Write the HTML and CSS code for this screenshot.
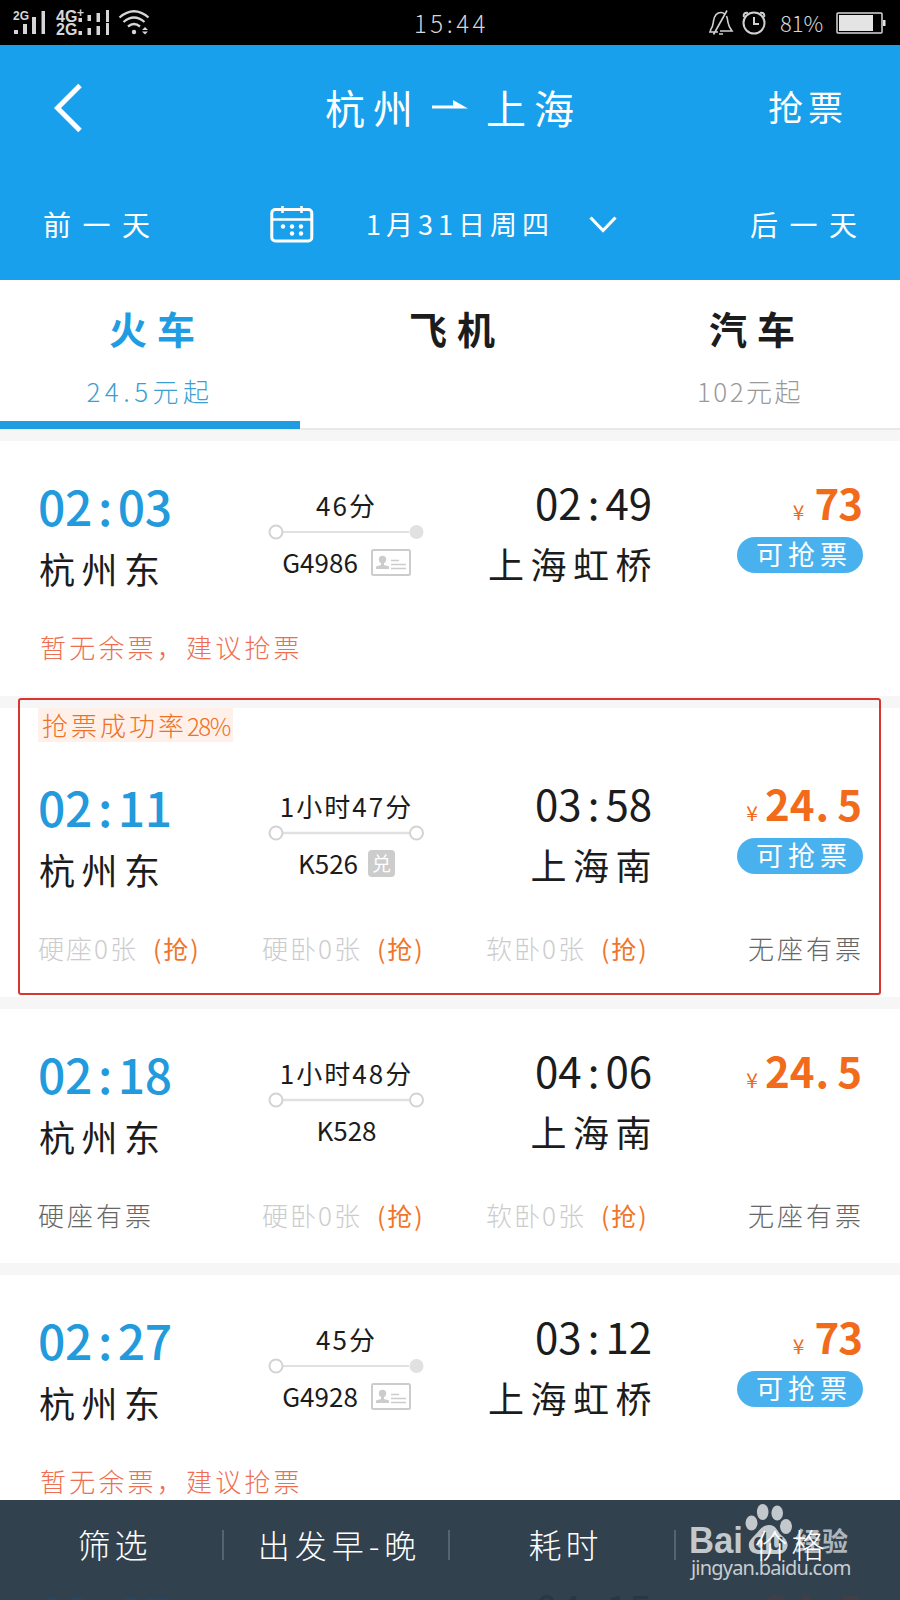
FILE: index.html
```html
<!DOCTYPE html>
<html lang="zh-CN">
<head>
<meta charset="utf-8">
<title>杭州 - 上海</title>
<link rel="stylesheet" href="styles.css">
</head>
<body>
<svg width="0" height="0" class="defs">
  <symbol id="idcard" viewBox="0 0 40 27"><rect x="1" y="1" width="38" height="25" rx="1.500" fill="#fff" stroke="#ccc" stroke-width="2"/><circle cx="11.500" cy="10.500" r="3.700" fill="#ccc"/><path d="M10 12h3v4l5 1.500V20H5v-2.500L10 16z" fill="#ccc"/><path d="M20 11.500h8M20 15.500h15M20 19.500h15" stroke="#ccc" stroke-width="1.600"/></symbol>
  <symbol id="route-open" viewBox="0 0 156 16"><path d="M15 8h126" stroke="#e1e1e1" stroke-width="2.500"/><circle cx="8" cy="8" r="6.500" fill="#fff" stroke="#d3d3d3" stroke-width="2"/><circle cx="148.500" cy="8" r="6.500" fill="#fff" stroke="#d3d3d3" stroke-width="2"/></symbol>
  <symbol id="route-end" viewBox="0 0 156 16"><path d="M15 8h126" stroke="#e1e1e1" stroke-width="2"/><circle cx="8" cy="8" r="6.500" fill="#fff" stroke="#d3d3d3" stroke-width="2"/><circle cx="148.500" cy="8" r="7" fill="#e1e1e1"/></symbol>
</svg>
<div class="screen">
  <div class="status">
    <svg class="signals" width="150" height="45" viewBox="0 0 150 45" fill="#d6d6d6">
      <text x="13" y="20" class="net-small">2G</text>
      <path d="M14 30h4v4h-4zM23 24h4v10h-4zM32 17h4v17h-4zM41.500 11h3.500v23h-3.500z"/>
      <text x="56" y="22" class="net">4G</text><text x="77" y="17" class="net-plus">+</text>
      <text x="56" y="35" class="net">2G</text>
      <path d="M78.500 18h3.500v4h-3.500zM87.500 15h3.500v6h-3.500zM96.500 13h3.500v9h-3.500zM106 10h3v12h-3zM78.500 31h3.500v4h-3.500zM87.500 28h3.500v7h-3.500zM96.500 26h3.500v9h-3.500zM106 23h3v12h-3z"/>
      <g fill="none" stroke="#d6d6d6" stroke-width="2.300"><path d="M119.500 17.500q14.500-12.500 29 0M123.500 22q10.500-9 21 0M128 26.500q6-5 12 0"/></g>
      <circle cx="134" cy="32" r="2.200"/><path d="M142 30l3-3 3 3zM142 31.500l3 3 3-3z"/>
    </svg>
    <div class="clock">15:44</div>
    <svg class="alerts" width="58" height="45" viewBox="0 0 58 45" fill="none" stroke="#d0d0d0" stroke-width="1.600">
      <path d="M10 32H2l1-3c2-2 2-5 2.500-8 .8-5 3.500-8.500 7.500-8.500 1.500 0 2.500.4 3.500 1.500M18.500 16c1 2 1 4 1.500 6.500.5 3.500 1.500 5 4 8.500H12M5.500 34.500L19 10.500M11 34h4"/>
      <circle cx="46" cy="23" r="10.500" stroke-width="2"/><path d="M46 17v7h5M36 17c-1-3 1-5 4-4M56 17c1-3-1-5-4-4" stroke-width="2"/>
    </svg>
    <div class="percent">81%</div>
    <svg class="battery" width="52" height="45" viewBox="0 0 52 45"><rect x="2" y="13" width="45" height="20" rx="1" fill="none" stroke="#d8d8d8" stroke-width="1.500"/><path d="M4 15h34v16H4z" fill="#e4e4e4"/><path d="M48 20h2.500v6H48z" fill="#e4e4e4"/></svg>
  </div>

  <header class="header">
    <div class="nav">
      <svg class="back" width="30" height="52" viewBox="0 0 30 52"><path d="M26 4.500L3.500 27 26 49.500" fill="none" stroke="#fff" stroke-width="5"/></svg>
      <h1 class="title"><span>杭州</span><svg width="36" height="14" viewBox="0 0 36 14"><path d="M0 5.500h21V0l15 8.500H0z" fill="#fff"/></svg><span>上海</span></h1>
      <div class="grab">抢票</div>
    </div>
    <div class="days">
      <span class="prev">前一天</span>
      <svg class="calendar" width="44" height="38" viewBox="0 0 44 38"><rect x="1.800" y="4.500" width="40" height="31.500" rx="3.500" fill="none" stroke="#fff" stroke-width="3"/><path d="M3 14.500h38M12.500 1v7M31.500 1v7" stroke="#fff" stroke-width="2.500"/><g fill="#fff"><circle cx="13" cy="21.500" r="2.200"/><circle cx="22" cy="21.500" r="2.200"/><circle cx="31" cy="21.500" r="2.200"/><circle cx="22" cy="28.500" r="2.200"/><circle cx="31" cy="28.500" r="2.200"/></g></svg>
      <span class="date">1月31日周四</span>
      <svg class="down" width="28" height="20" viewBox="0 0 28 20"><path d="M1.500 3.500L14 16.500 26.500 3.500" fill="none" stroke="#fff" stroke-width="3.200"/></svg>
      <span class="next">后一天</span>
    </div>
  </header>

  <nav class="tabs">
    <div class="tab active"><b>火车</b><span class="from wide">24.5元起</span></div>
    <div class="tab"><b>飞机</b></div>
    <div class="tab"><b>汽车</b><span class="from">102元起</span></div>
  </nav>

  <main class="list">
    <section class="card">
      <div class="trip">
        <div class="dep"><div class="time">02<i>:</i>03</div><div class="station">杭州东</div></div>
        <div class="mid"><div class="dur">46分</div><svg class="route" width="156" height="16"><use href="#route-end"/></svg><div class="train">G4986<svg class="id" width="40" height="27"><use href="#idcard"/></svg></div></div>
        <div class="arr"><div class="time">02<i>:</i>49</div><div class="station">上海虹桥</div></div>
        <div class="fare"><div class="price short"><small>¥</small>73</div><div class="pill">可抢票</div></div>
      </div>
      <div class="notice">暂无余票，建议抢票</div>
    </section>

    <section class="card marked">
      <div class="tag">抢票成功率<span>28%</span></div>
      <div class="trip">
        <div class="dep"><div class="time">02<i>:</i>11</div><div class="station">杭州东</div></div>
        <div class="mid"><div class="dur">1小时47分</div><svg class="route" width="156" height="16"><use href="#route-open"/></svg><div class="train">K526<span class="swap">兑</span></div></div>
        <div class="arr"><div class="time">03<i>:</i>58</div><div class="station">上海南</div></div>
        <div class="fare"><div class="price"><small>¥</small>24<i>.</i>5</div><div class="pill">可抢票</div></div>
      </div>
      <div class="seats"><span class="none">硬座0张<em>(抢)</em></span><span class="none">硬卧0张<em>(抢)</em></span><span class="none">软卧0张<em>(抢)</em></span><span class="has">无座有票</span></div>
      <div class="marker"></div>
    </section>

    <section class="card">
      <div class="trip">
        <div class="dep"><div class="time">02<i>:</i>18</div><div class="station">杭州东</div></div>
        <div class="mid"><div class="dur">1小时48分</div><svg class="route" width="156" height="16"><use href="#route-open"/></svg><div class="train">K528</div></div>
        <div class="arr"><div class="time">04<i>:</i>06</div><div class="station">上海南</div></div>
        <div class="fare"><div class="price"><small>¥</small>24<i>.</i>5</div></div>
      </div>
      <div class="seats"><span class="has">硬座有票</span><span class="none">硬卧0张<em>(抢)</em></span><span class="none">软卧0张<em>(抢)</em></span><span class="has">无座有票</span></div>
    </section>

    <section class="card">
      <div class="trip">
        <div class="dep"><div class="time">02<i>:</i>27</div><div class="station">杭州东</div></div>
        <div class="mid"><div class="dur">45分</div><svg class="route" width="156" height="16"><use href="#route-end"/></svg><div class="train">G4928<svg class="id" width="40" height="27"><use href="#idcard"/></svg></div></div>
        <div class="arr"><div class="time">03<i>:</i>12</div><div class="station">上海虹桥</div></div>
        <div class="fare"><div class="price short"><small>¥</small>73</div><div class="pill">可抢票</div></div>
      </div>
      <div class="notice">暂无余票，建议抢票</div>
    </section>
  </main>

  <footer class="bar">
    <div class="under trip">
      <div class="dep"><div class="time">02<i>:</i>37</div></div>
      <div class="mid"><div class="dur">1小时36分</div></div>
      <div class="arr"><div class="time">04<i>:</i>15</div></div>
      <div class="fare"><div class="price">24<i>.</i>5</div></div>
    </div>
    <div class="watermark">
      <svg width="162" height="52" viewBox="0 0 162 52">
        <text x="-2" y="50" class="wm-bai" textLength="54" lengthAdjust="spacingAndGlyphs">Bai</text>
        <g fill="#c3c8cd">
          <ellipse cx="60.500" cy="20" rx="6" ry="7.500"/><ellipse cx="71.700" cy="9" rx="5.800" ry="8"/><ellipse cx="86.200" cy="10" rx="5.800" ry="7.500"/><ellipse cx="95" cy="23.500" rx="6" ry="7.500"/>
          <path d="M78 22c7 0 8 6 12 10 5 4 8 8 6 13-2 5-6 6-11 6H69c-6 0-10-2-11-7s2-8 6-12 7-10 14-10z"/>
        </g>
        <text x="62" y="47" class="wm-du" textLength="31">du</text>
        <text x="104" y="48" class="wm-cn" textLength="53">经验</text>
      </svg>
      <div class="wm-url">jingyan.baidu.com</div>
    </div>
    <div class="sorts"><span class="two">筛选</span><span>出发早-晚</span><span class="two">耗时</span><span class="two">价格</span></div>
  </footer>
</div>
</body>
</html>
```
FILE: styles.css
```css
* { box-sizing: border-box; }
body { margin: 0; background: #fff; font-family: "Noto Sans CJK SC", sans-serif; font-weight: 300; color: #1c1c1c; }
.defs { position: absolute; }
.screen { width: 900px; height: 1600px; overflow: hidden; display: flex; flex-direction: column; white-space: nowrap; }

.status { height: 45px; flex: none; background: #000; color: #d6d6d6; display: flex; align-items: center; }
.net-small { font: bold 12px "Liberation Sans", sans-serif; }
.net { font: bold 16px "Liberation Sans", sans-serif; }
.net-plus { font: bold 12px "Liberation Sans", sans-serif; }
.clock { margin-left: 264px; width: 80px; font-size: 24px; letter-spacing: 3.5px; line-height: 45px; }
.alerts { margin-left: 214px; }
.percent { margin-left: 14px; width: 50px; font-size: 22px; line-height: 45px; }
.battery { margin-left: 5px; }

.header { height: 235px; flex: none; background: #18a0ed; color: #fff; padding-top: 2px; }
.nav { height: 120px; padding-left: 54px; display: flex; align-items: center; }
.title { margin: 0 0 0 241px; width: 443px; font-size: 40px; font-weight: 400; letter-spacing: 8px; line-height: 60px; display: flex; align-items: center; }
.title svg { margin: 0 18px 0 11px; }
.grab { font-size: 35px; letter-spacing: 5px; line-height: 58px; font-weight: 400; margin-top: -2px; }
.days { height: 113px; padding: 1px 0 0 43px; display: flex; align-items: center; font-size: 28px; font-weight: 400; line-height: 44px; letter-spacing: 11.5px; }
.prev { width: 227px; }
.calendar { margin-right: 52px; }
.date { width: 223px; font-size: 27px; letter-spacing: 5px; }
.down { margin-right: 133px; }

.tabs { height: 150px; flex: none; display: grid; grid-template-columns: repeat(3, 1fr); border-bottom: 2px solid #e8e8e8; }
.tab { height: 149px; padding-top: 22px; display: flex; flex-direction: column; align-items: center; }
.tab b { font-size: 38px; font-weight: 700; line-height: 52px; letter-spacing: 10px; padding-left: 14px; }
.from { font-size: 26px; line-height: 40px; letter-spacing: 2.5px; margin-top: 17px; color: #999; }
.wide { letter-spacing: 4.5px; }
.active { color: #1f9ce2; border-bottom: 8px solid #1f9ce2; border-radius: 0 4px 0 0; }
.active .from { color: #3b9fd2; }

.list { flex: none; height: 1070px; overflow: hidden; padding-top: 11px; background: #f6f6f6; display: flex; flex-direction: column; gap: 12px; }
.card { flex: none; height: 255px; padding: 0 38px; background: #fff; position: relative; }
.card:nth-child(3) { height: 254px; }
.marked { height: 289px; }
.trip { display: grid; grid-template-columns: 195px 227px 192px 210px; height: 180px; }
.time i { font-style: normal; padding: 0 6px; }
.dep .time { padding-top: 37px; font-size: 48px; font-weight: 500; line-height: 54px; color: #229adc; letter-spacing: -0.4px; }
.dep .station { margin-top: 11px; padding-left: 1px; }
.station { font-size: 36px; line-height: 50px; letter-spacing: 6.5px; font-weight: 400; }
.mid { display: flex; flex-direction: column; align-items: center; }
.dur { padding-top: 45px; font-size: 26px; line-height: 38px; letter-spacing: 2px; font-weight: 400; }
.route { flex: none; display: block; margin-left: -2px; }
.train { display: flex; align-items: center; margin-top: 2px; height: 40px; font-size: 26px; line-height: 36px; font-weight: 400; }
.id { margin-left: 13px; }
.swap { width: 27px; height: 27px; margin-left: 10px; background: #ccc; border-radius: 4px; color: #fff; font-size: 19px; line-height: 26px; text-align: center; }
.arr { text-align: right; }
.arr .time { padding-top: 35px; font-size: 42px; line-height: 52px; font-weight: 400; }
.arr .station { margin: 10px -6px 0 0; }
.fare { display: flex; flex-direction: column; align-items: flex-end; }
.price { height: 96px; padding-top: 35px; font-size: 42px; font-weight: 700; line-height: 52px; color: #f16b1b; }
.price i { font-style: normal; padding: 0 8px 0 1px; }
.short { letter-spacing: -1px; }
.price small { font-size: 21px; font-weight: 400; margin-right: 7px; }
.short small { margin-right: 11px; }
.pill { width: 126px; height: 36px; border-radius: 18px; background: #49b2ee; color: #fff; font-size: 27px; line-height: 34px; letter-spacing: 5px; padding-left: 19px; font-weight: 400; }
.fare .pill { margin-right: -1px; }
.notice { padding: 7px 0 0 2px; font-size: 26px; line-height: 38px; letter-spacing: 3.2px; color: #ef6e51; }
.tag { width: 195px; height: 34px; padding-left: 4px; background: #fff0ea; color: #ee7125; font-size: 26px; line-height: 34px; letter-spacing: 3px; }
.tag span { font-size: 24px; letter-spacing: -1.5px; }
.seats { padding-top: 7px; display: grid; grid-template-columns: 224px 224px 262px 1fr; font-size: 26px; line-height: 38px; }
.none { color: #ccc; letter-spacing: 2px; }
.none em { font-style: normal; font-weight: 400; font-size: 25px; color: #f0752b; letter-spacing: 2px; margin-left: 15px; }
.has { color: #666; letter-spacing: 3px; }
.marker { position: absolute; left: 18px; top: -10px; width: 863px; height: 297px; border: 2px solid #dc352d; border-radius: 3px; }

.bar { flex: none; height: 100px; background: #32414e; color: #fff; position: relative; overflow: hidden; }
.sorts { position: relative; height: 90px; display: grid; grid-template-columns: 224px 226px 226px 224px; align-items: center; font-size: 32px; letter-spacing: 5px; }
.sorts span { height: 30px; line-height: 28px; text-align: center; border-right: 2px solid #566370; padding-left: 7px; }
.sorts span:last-child { border: 0; }
.sorts .two { font-size: 33px; letter-spacing: 4px; }
.under { position: absolute; left: 38px; top: 48px; color: #2a3843; }
.under .dep .time { color: #2a465d; }
.under .price { color: #3e3f48; }
.watermark { position: absolute; left: 691px; top: 3px; width: 162px; }
.watermark svg { display: block; }
.wm-bai { font: bold 36px "Liberation Sans", sans-serif; fill: #c3c8cd; }
.wm-du { font: bold 24px "Liberation Sans", sans-serif; fill: #32414e; }
.wm-cn { font: bold 26px "Noto Sans CJK SC", sans-serif; fill: #aeb5bb; }
.wm-url { font: 20px/26px "Noto Sans", sans-serif; color: #c8cdd1; letter-spacing: -0.8px; }
```
